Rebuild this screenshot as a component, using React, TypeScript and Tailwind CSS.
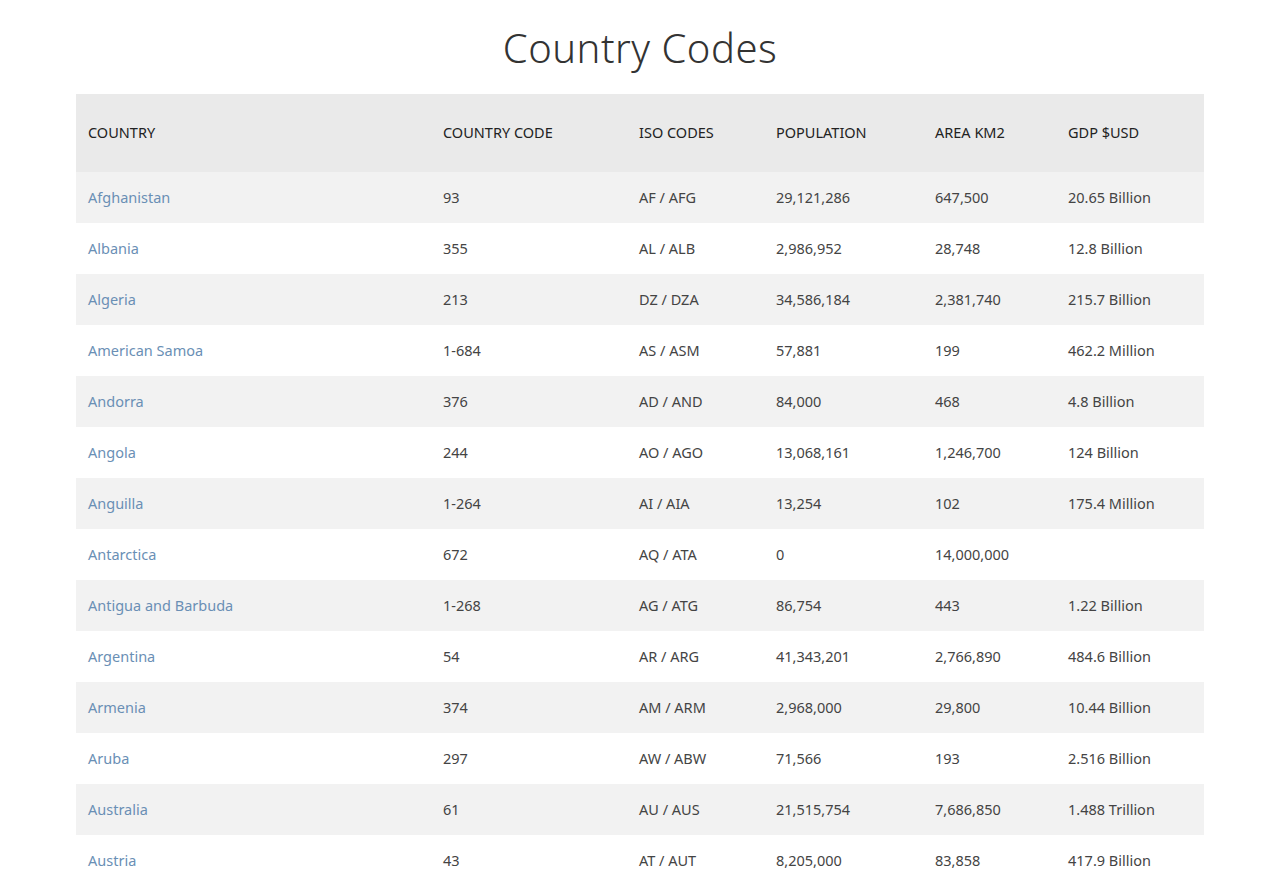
const rows: [string, string, string, string, string, string][] = [
  ['Afghanistan', '93', 'AF / AFG', '29,121,286', '647,500', '20.65 Billion'],
  ['Albania', '355', 'AL / ALB', '2,986,952', '28,748', '12.8 Billion'],
  ['Algeria', '213', 'DZ / DZA', '34,586,184', '2,381,740', '215.7 Billion'],
  ['American Samoa', '1-684', 'AS / ASM', '57,881', '199', '462.2 Million'],
  ['Andorra', '376', 'AD / AND', '84,000', '468', '4.8 Billion'],
  ['Angola', '244', 'AO / AGO', '13,068,161', '1,246,700', '124 Billion'],
  ['Anguilla', '1-264', 'AI / AIA', '13,254', '102', '175.4 Million'],
  ['Antarctica', '672', 'AQ / ATA', '0', '14,000,000', ''],
  ['Antigua and Barbuda', '1-268', 'AG / ATG', '86,754', '443', '1.22 Billion'],
  ['Argentina', '54', 'AR / ARG', '41,343,201', '2,766,890', '484.6 Billion'],
  ['Armenia', '374', 'AM / ARM', '2,968,000', '29,800', '10.44 Billion'],
  ['Aruba', '297', 'AW / ABW', '71,566', '193', '2.516 Billion'],
  ['Australia', '61', 'AU / AUS', '21,515,754', '7,686,850', '1.488 Trillion'],
  ['Austria', '43', 'AT / AUT', '8,205,000', '83,858', '417.9 Billion'],
];

const headers = ['COUNTRY', 'COUNTRY CODE', 'ISO CODES', 'POPULATION', 'AREA KM2', 'GDP $USD'];
const widths = ['w-[355px]', 'w-[196px]', 'w-[137px]', 'w-[159px]', 'w-[133px]', 'w-[148px]'];

export default function App() {
  return (
    <div className="min-h-[882px] bg-white text-[#333] font-['Open_Sans',sans-serif]">
      <h1 className="pt-[24px] text-center text-[40px] leading-[48px] font-light text-[#333] tracking-[0.5px]">
        Country Codes
      </h1>
      <table className="mx-auto mt-[22px] w-[1128px] table-fixed border-collapse text-[14.5px]">
        <thead>
          <tr className="h-[78px] bg-[#eaeaea]">
            {headers.map((h, i) => (
              <th key={h} className={`${widths[i]} px-3 text-left font-normal text-[#222]`}>
                {h}
              </th>
            ))}
          </tr>
        </thead>
        <tbody>
          {rows.map((r, i) => (
            <tr key={r[0]} className={`h-[51px] ${i % 2 === 0 ? 'bg-[#f2f2f2]' : 'bg-white'}`}>
              {r.map((c, j) => (
                <td key={j} className={`px-3 ${j === 0 ? 'text-[#6a8fb5]' : 'text-[#444]'}`}>
                  {c}
                </td>
              ))}
            </tr>
          ))}
        </tbody>
      </table>
    </div>
  );
}
